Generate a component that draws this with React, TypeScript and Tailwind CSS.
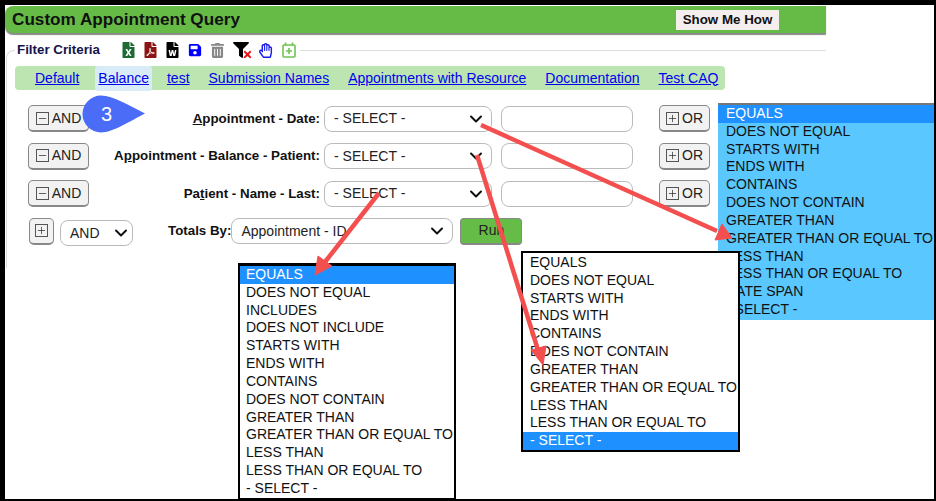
import { ChevronDown, Minus, Plus } from 'lucide-react';
import { FaFileExcel, FaFilePdf, FaFileWord, FaSave, FaTrashAlt, FaFilter, FaRegHandPaper, FaTimes } from 'react-icons/fa';

const tabs = ['Default', 'Balance', 'test', 'Submission Names', 'Appointments with Resource', 'Documentation', 'Test CAQ'];

const rows = [
  { label: 'ppointment - Date:', key: 'A', before: '' },
  { label: 'pointment - Balance - Patient:', key: 'p', before: 'A' },
  { label: 'ient - Name - Last:', key: 't', before: 'Pa' },
];

const dateOptions = ['EQUALS', 'DOES NOT EQUAL', 'STARTS WITH', 'ENDS WITH', 'CONTAINS', 'DOES NOT CONTAIN', 'GREATER THAN', 'GREATER THAN OR EQUAL TO', 'LESS THAN', 'LESS THAN OR EQUAL TO', 'DATE SPAN', '- SELECT -'];
const balanceOptions = ['EQUALS', 'DOES NOT EQUAL', 'STARTS WITH', 'ENDS WITH', 'CONTAINS', 'DOES NOT CONTAIN', 'GREATER THAN', 'GREATER THAN OR EQUAL TO', 'LESS THAN', 'LESS THAN OR EQUAL TO', '- SELECT -'];
const nameOptions = ['EQUALS', 'DOES NOT EQUAL', 'INCLUDES', 'DOES NOT INCLUDE', 'STARTS WITH', 'ENDS WITH', 'CONTAINS', 'DOES NOT CONTAIN', 'GREATER THAN', 'GREATER THAN OR EQUAL TO', 'LESS THAN', 'LESS THAN OR EQUAL TO', '- SELECT -'];

function BoxIcon({ minus }: { minus?: boolean }) {
  return (
    <span className="flex h-[13px] w-[13px] shrink-0 items-center justify-center border border-[#555] text-[#222]">
      {minus ? <Minus size={11} strokeWidth={1.5} /> : <Plus size={11} strokeWidth={1.5} />}
    </span>
  );
}

function LogicButton({ text, minus }: { text: string; minus?: boolean }) {
  return (
    <button className="flex h-[27px] items-center justify-center gap-[3px] rounded-[5px] border border-[#888] border-b-2 bg-[#f2f2f2] text-[14px] text-[#222]">
      <BoxIcon minus={minus} />
      {text}
    </button>
  );
}

function Dropdown({ text, className }: { text: string; className: string }) {
  return (
    <div className={`flex h-[26px] items-center justify-between rounded-[8px] border border-[#bbb] bg-white pl-[9px] pr-[5px] text-[14px] text-[#222] ${className}`}>
      <span>{text}</span>
      <ChevronDown size={20} strokeWidth={2.4} className="text-[#111]" />
    </div>
  );
}

function OptionList({ options, active, inset, className }: { options: string[]; active: string; inset: string; className: string }) {
  return (
    <ul className={`absolute text-[14px] leading-[17.83px] whitespace-nowrap text-[#111] ${className}`}>
      {options.map((o) => (
        <li key={o} className={o === active ? `bg-[#1e90ff] text-white ${inset}` : inset}>
          {o}
        </li>
      ))}
    </ul>
  );
}

export default function App() {
  return (
    <div className="relative h-[501px] w-[936px] overflow-hidden border-t-[5px] border-r-[2px] border-b-[2px] border-l-[5px] border-black bg-white font-['Liberation_Sans',sans-serif]">
      <header className="mt-px flex h-[27px] w-[821px] items-center justify-between rounded-l-lg bg-[#66bb46] pl-[7px] pr-[47px] shadow-[0_2px_1px_#888]">
        <h1 className="text-[17.15px] font-bold text-[#111]">Custom Appointment Query</h1>
        <button className="flex h-[20px] w-[103px] items-center justify-center bg-[#f5eeee] text-[13.33px] font-bold text-[#111]">Show Me How</button>
      </header>

      <fieldset className="mt-[7px] ml-px h-[228px] w-[820px] rounded-tl-lg border-t border-l border-[#ddd] pt-[6px]">
        <legend className="ml-[8px] flex h-[20px] items-center pr-[4px] pl-[2px]">
          <span className="mr-[22px] text-[13.33px] font-bold text-[#14144a]">Filter Criteria</span>
          <span className="flex items-center gap-[9px]">
            <FaFileExcel size={16} className="w-[13px] text-[#1d6b32]" />
            <FaFilePdf size={16} className="w-[13px] text-[#8b1414]" />
            <FaFileWord size={16} className="w-[13px] text-black" />
            <FaSave size={14} className="w-[14px] text-[#0000ff]" />
            <FaTrashAlt size={15} className="w-[13px] text-[#888]" />
            <span className="relative flex w-[19px]">
              <FaFilter size={16} className="text-black" />
              <FaTimes size={11} className="absolute top-[7px] left-[9px] text-[#e8141c]" />
            </span>
            <span className="-ml-[3px] flex">
              <FaRegHandPaper size={15} className="text-[#1a1af0]" />
            </span>
            <svg width="14" height="16" viewBox="0 0 14 16" fill="none" stroke="#6fc34e" strokeWidth="1.6">
              <rect x="1" y="3" width="12" height="12" rx="1" />
              <path d="M3.5 0.5v3M10.5 0.5v3M7 6v6M4 9h6" />
            </svg>
          </span>
        </legend>

        <nav className="ml-[8px] flex h-[24px] w-[710px] items-center rounded-[4px] bg-[#bde5b2] pl-[20px] text-[14px] whitespace-nowrap text-[#0000ee]">
          {tabs.map((t) => (
            <a key={t} className={t === 'Balance' ? 'mr-[15px] -ml-[3px] rounded-[3px] bg-[#d9ebf7] px-[3px] py-[2px] underline' : 'mr-[19px] underline last:mr-0'}>
              {t}
            </a>
          ))}
        </nav>

        <div className="mt-[15px] ml-[21px] flex w-[682px] flex-col gap-[10.5px]">
          {rows.map((r) => (
            <div key={r.label} className="flex items-center">
              <div className="w-[61px] [&>button]:w-full">
                <LogicButton text="AND" minus />
              </div>
              <label className="flex-1 text-right text-[13.33px] font-bold text-[#111]">
                {r.before}
                <span className="underline">{r.key}</span>
                {r.label}
              </label>
              <Dropdown text="- SELECT -" className="ml-[4px] w-[168px]" />
              <div className="ml-[9px] h-[26px] w-[132px] rounded-[8px] border border-[#bbb] bg-white" />
              <div className="ml-[26px] w-[51px] [&>button]:w-full">
                <LogicButton text="OR" />
              </div>
            </div>
          ))}

          <div className="-mt-[1.5px] flex items-center">
            <button className="ml-px flex h-[27px] w-[25px] items-center justify-center rounded-[5px] border border-b-2 border-[#888] bg-[#f2f2f2]">
              <BoxIcon />
            </button>
            <div className="mt-[4px] ml-[6px] flex h-[26px] w-[73px] items-center justify-between rounded-[8px] border border-[#bbb] pr-[1px] pl-[9px] text-[14px] text-[#222]">
              AND
              <ChevronDown size={20} strokeWidth={2.4} className="text-[#111]" />
            </div>
            <span className="ml-[35px] text-[13.33px] font-bold text-[#111]">Totals By:</span>
            <Dropdown text="Appointment - ID" className="w-[222px]" />
            <button className="ml-[7px] h-[27px] w-[62px] rounded-[4px] border border-b-2 border-[#888] bg-[#65bc46] text-[14px] text-[#222]">Run</button>
          </div>
        </div>
      </fieldset>

      <OptionList options={dateOptions} active="EQUALS" inset="pl-[8px]" className="top-[98px] left-[713px] w-[216px] border-t-2 border-[#777] bg-[#5ac8ff] pb-[1px]" />
      <OptionList options={nameOptions} active="EQUALS" inset="pl-[6px]" className="top-[258px] left-[233px] w-[218px] border-2 border-t-[3px] border-black bg-white" />
      <OptionList options={balanceOptions} active="- SELECT -" inset="pl-[7px]" className="top-[246px] left-[516px] w-[219px] border-2 border-black bg-white pt-[1px]" />

      {/* step marker */}
      <svg className="absolute top-[90px] left-[75px]" width="70" height="38" viewBox="0 0 70 38">
        <path d="M21 0.5C33 0.5 50 11 65 18.5C50 26 33 37.5 21 37.5A18.5 18.5 0 0 1 21 0.5Z" fill="#4a6cf7" />
      </svg>
      <span className="absolute top-[97px] left-[96px] text-[20px] leading-[24px] text-white">3</span>

      {/* callout arrows */}
      <svg className="pointer-events-none absolute top-[-5px] left-[-5px]" width="936" height="501" fill="none" stroke="#f44f4f" strokeWidth="4.5">
        <path d="M481 125L717 231" />
        <path d="M715 240L732 238L722 224Z" fill="#f44f4f" strokeWidth="1" />
        <path d="M477 155L538 350" />
        <path d="M531 350L543 365L546 346Z" fill="#f44f4f" strokeWidth="1" />
        <path d="M379 193L325 262" />
        <path d="M318 256L315 275L332 266Z" fill="#f44f4f" strokeWidth="1" />
      </svg>
    </div>
  );
}
